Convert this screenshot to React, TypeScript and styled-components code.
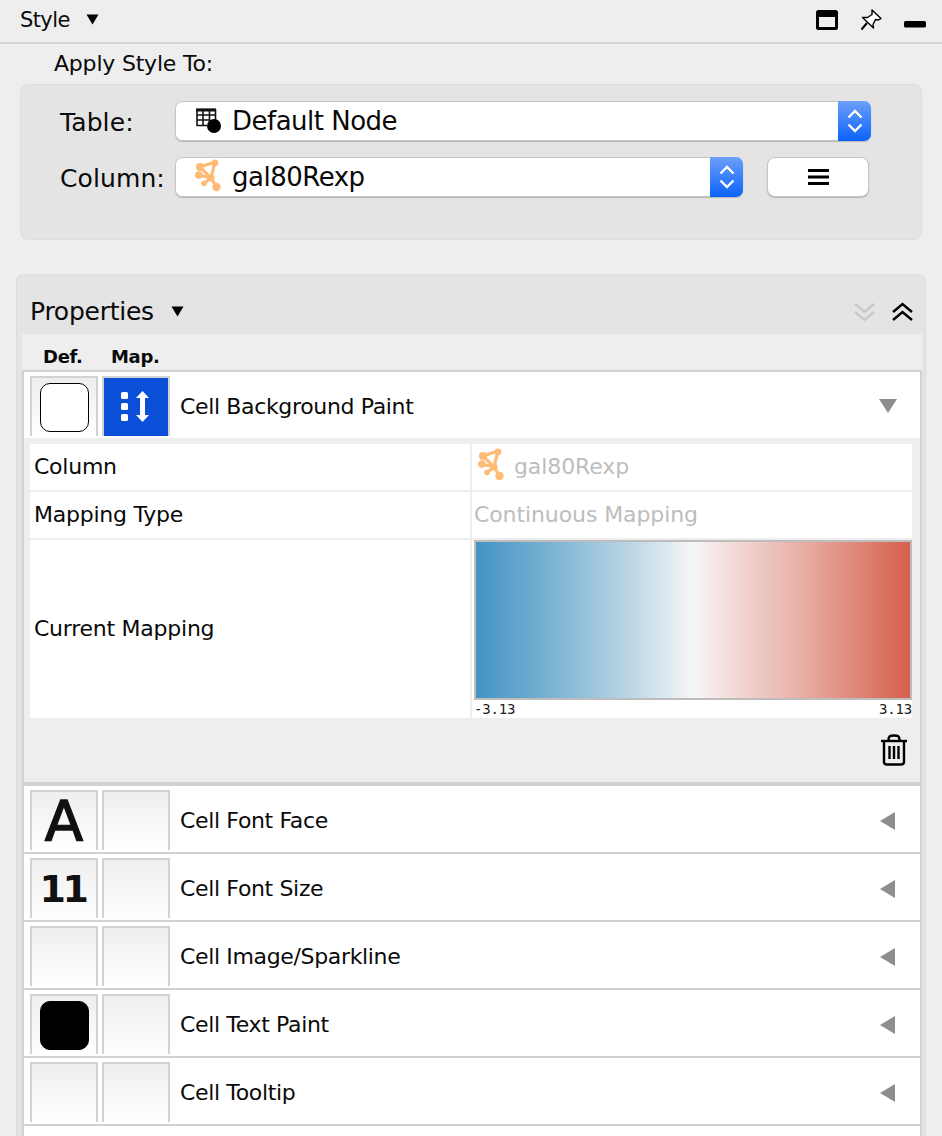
import styled, { createGlobalStyle } from 'styled-components';

const GlobalStyle = createGlobalStyle`
  html, body {
    margin: 0;
    padding: 0;
    background: #eeeeee;
  }
  * {
    box-sizing: border-box;
  }
`;

const Page = styled.div`
  width: 942px;
  height: 1136px;
  overflow: hidden;
  background: #eeeeee;
  color: #0a0a0a;
  font-family: 'DejaVu Sans', sans-serif;
`;

const TopBar = styled.div`
  height: 44px;
  display: flex;
  align-items: center;
  padding: 0 16px 3px 20px;
  border-bottom: 2px solid #d4d4d4;
`;

const TopTitle = styled.span`
  font-size: 21px;
  letter-spacing: -0.6px;
  width: 66px;
`;

const TopIcons = styled.div`
  margin-left: auto;
  display: flex;
  align-items: center;
  width: 110px;
  gap: 22px;
`;

const ApplyLabel = styled.div`
  height: 40px;
  padding: 7px 0 0 54px;
  font-size: 22px;
  letter-spacing: -0.2px;
  line-height: 26px;
`;

const GroupBox = styled.div`
  margin-left: 20px;
  width: 902px;
  height: 156px;
  padding: 16px 0 0 39px;
  background: #e4e4e4;
  border: 1px solid #dedede;
  border-radius: 8px;
  display: flex;
  flex-direction: column;
  gap: 16px;
`;

const FieldRow = styled.div`
  display: flex;
  align-items: center;
  height: 40px;
`;

const FieldLabel = styled.span`
  width: 115px;
  padding-top: 2px;
  font-size: 25px;
  letter-spacing: 0.1px;
`;

const Select = styled.div<{ $width: number }>`
  width: ${(p) => p.$width}px;
  height: 40px;
  display: flex;
  align-items: center;
  background: #fff;
  border-radius: 7px;
  box-shadow: 0 0 0 1px #c4c4c4 inset, 0 1px 1px #b4b4b4;
  overflow: hidden;
`;

const SelectIcon = styled.span`
  width: 57px;
  display: flex;
  padding-left: 20px;
`;

const SelectValue = styled.span`
  flex: 1;
  font-size: 26px;
  letter-spacing: -0.5px;
`;

const Spinner = styled.span`
  width: 33px;
  height: 40px;
  display: flex;
  align-items: center;
  justify-content: center;
  background: linear-gradient(#6d9ffb, #0a62fb);
`;

const MenuButton = styled.button`
  margin-left: 24px;
  width: 102px;
  height: 40px;
  display: flex;
  align-items: center;
  justify-content: center;
  background: #fff;
  border: 1px solid #c4c4c4;
  border-radius: 8px;
  box-shadow: 0 1px 1px #b4b4b4;
  padding: 0;
`;

const PropertiesPanel = styled.div`
  margin: 34px 0 0 16px;
  width: 910px;
  height: 900px;
  padding: 0 3px 0 5px;
  background: #e4e4e4;
  border: 1px solid #dcdcdc;
  border-bottom: 0;
  border-radius: 8px 8px 0 0;
`;

const PanelHeader = styled.div`
  height: 59px;
  display: flex;
  align-items: center;
  padding: 14px 0 0 8px;
`;

const PanelTitle = styled.span`
  font-size: 25px;
  letter-spacing: -0.25px;
  width: 141px;
`;

const CollapseIcons = styled.div`
  margin-left: auto;
  display: flex;
  align-items: center;
  gap: 17px;
  padding-right: 9px;
`;

const ColumnHeads = styled.div`
  height: 38px;
  background: #eeeeee;
  border-bottom: 2px solid #d2d2d2;
  display: flex;
  padding: 12px 0 0 21px;
  font-size: 18px;
  font-weight: bold;
  line-height: 22px;
  letter-spacing: -0.3px;
`;

const HeadCell = styled.span`
  width: 68px;
`;

const PropertyList = styled.div`
  background: #fff;
  border-left: 2px solid #d2d2d2;
  border-right: 2px solid #d2d2d2;
  min-height: 780px;
`;

const PropertyRow = styled.div`
  height: 68px;
  padding: 4px 23px 0 6px;
  display: flex;
  align-items: flex-start;
  gap: 4px;
  background: #fff;
  border-bottom: 2px solid #d2d2d2;
`;

const OpenRow = styled(PropertyRow)`
  height: 66px;
  border-bottom: 0;
`;

const CellButton = styled.div<{ $active?: boolean }>`
  width: 68px;
  height: 60px;
  display: flex;
  align-items: center;
  justify-content: center;
  border: 2px solid #d2d2d2;
  border-bottom: 0;
  background: ${(p) => (p.$active ? '#0b4fd9' : 'linear-gradient(#eeeeee, #ffffff)')};
`;

const Swatch = styled.span<{ $fill: string }>`
  width: 49px;
  height: 49px;
  border-radius: 10px;
  border: 1px solid #000;
  background: ${(p) => p.$fill};
`;

const FontGlyph = styled.span`
  font-size: 56px;
  line-height: 58px;
  color: #111;
  -webkit-text-stroke: 1.5px #111;
`;

const SizeGlyph = styled.span`
  font-size: 38px;
  font-weight: bold;
  line-height: 58px;
  letter-spacing: -3.5px;
  padding-right: 3px;
  color: #111;
`;

const PropertyName = styled.span`
  margin-left: 6px;
  flex: 1;
  line-height: 62px;
  font-size: 22px;
  letter-spacing: -0.35px;
`;

const Triangle = styled.svg`
  margin-top: 22px;
`;

const MappingArea = styled.div`
  height: 344px;
  padding: 6px 6px 0 6px;
  background: #eeeeee;
`;

const MappingTable = styled.div`
  display: grid;
  grid-template-columns: 440px 442px;
  grid-template-rows: 46px 46px 178px;
  gap: 2px 0;
  background: #eeeeee;
`;

const MappingKey = styled.div`
  background: #fff;
  padding: 0 0 2px 4px;
  display: flex;
  align-items: center;
  font-size: 22px;
  letter-spacing: -0.25px;
`;

const MappingValue = styled.div`
  margin-left: 2px;
  background: #fff;
  display: flex;
  align-items: center;
  padding: 0 0 2px 2px;
  gap: 8px;
  color: #bdbdbd;
  font-size: 22px;
  letter-spacing: -0.1px;
`;

const ValueIcon = styled.span`
  display: flex;
  margin-left: 4px;
`;

const GradientCell = styled.div`
  margin-left: 2px;
  background: #fff;
  padding-left: 2px;
  display: flex;
  flex-direction: column;
`;

const GradientBar = styled.div`
  height: 160px;
  border: 2px solid #bdbdbd;
  background: linear-gradient(90deg, #4393c3, #94c1da 25%, #d9e6ee 43%, #f7f7f7 50%, #f3dedc 58%, #e8aea5 75%, #d6604d);
`;

const ScaleLabels = styled.div`
  display: flex;
  justify-content: space-between;
  font-family: 'DejaVu Sans Mono', monospace;
  font-size: 14px;
  letter-spacing: -0.2px;
  line-height: 18px;
  color: #222;
`;

const TrashRow = styled.div`
  display: flex;
  justify-content: flex-end;
  padding: 16px 6px 0 0;
`;

const ThickDivider = styled.div`
  height: 4px;
  background: #d2d2d2;
`;

const NetworkIcon = () => (
  <svg width="28" height="36" viewBox="0 0 28 36" fill="#fdbb74" stroke="#fdbb74" strokeWidth="3.2">
    <path d="M20 3 L5 8 L16 19 L21.5 28 M16 19 L3.5 16 M16 19 L9 24.5 M20 3 L16 19" fill="none" />
    <circle cx="20" cy="3.8" r="3.4" stroke="none" />
    <circle cx="5" cy="8" r="4" stroke="none" />
    <circle cx="3.8" cy="16" r="3.8" stroke="none" />
    <circle cx="16" cy="19" r="3.6" stroke="none" />
    <circle cx="9" cy="24.5" r="2.8" stroke="none" />
    <circle cx="21.5" cy="28" r="4.2" stroke="none" />
  </svg>
);

const TableIcon = () => (
  <svg width="28" height="28" viewBox="0 0 28 28">
    <path
      d="M1.5 2.5H21M1.5 8H21M1.5 13H15M1.5 18.5H12M2 2v17M8 2v17M14.5 2v15M20.5 2v12"
      stroke="#111"
      strokeWidth="1.6"
      fill="none"
    />
    <rect x="1" y="1.5" width="20" height="3" fill="#111" />
    <circle cx="19" cy="19" r="7" fill="#000" />
  </svg>
);

const SpinnerArrows = () => (
  <svg width="16" height="26" viewBox="0 0 16 26" fill="none" stroke="#fff" strokeWidth="2.4">
    <path d="M1.5 9.5 L8 3 L14.5 9.5" />
    <path d="M1.5 16.5 L8 23 L14.5 16.5" />
  </svg>
);

const WindowIcon = () => (
  <svg width="22" height="20" viewBox="0 0 22 20">
    <rect x="1.5" y="1.5" width="19" height="17" rx="1" fill="none" stroke="#000" strokeWidth="3" />
    <rect x="1" y="1" width="20" height="6" fill="#000" />
  </svg>
);

const PinIcon = () => (
  <svg width="22" height="22" viewBox="0 0 22 22" fill="#fff" stroke="#000" strokeWidth="1.4" strokeLinejoin="round">
    <path d="M12 1 L21 9.5 L18.5 11 L15.5 10.5 L13 15.5 L13.5 19 L2.5 8.5 L7.5 8.5 L12 5.5 Z" />
    <path d="M7 14 L1.5 20.5" fill="none" strokeWidth="2" />
  </svg>
);

const MinimizeIcon = () => (
  <svg width="22" height="20" viewBox="0 0 22 20">
    <rect x="0" y="11" width="22" height="6.5" rx="1.5" fill="#000" />
  </svg>
);

const DoubleChevron = ({ up, color }: { up?: boolean; color: string }) => (
  <svg width="21" height="20" viewBox="0 0 21 20" fill="none" stroke={color} strokeWidth="2.4">
    {up ? <path d="M1 10 L10.5 2 L20 10 M1 18 L10.5 10 L20 18" /> : <path d="M1 2 L10.5 10 L20 2 M1 10 L10.5 18 L20 10" />}
  </svg>
);

const MappingIcon = () => (
  <svg width="34" height="34" viewBox="0 0 34 34" fill="#fff">
    <rect x="2" y="2" width="7" height="7" rx="1.5" />
    <rect x="2" y="13" width="7" height="7" rx="1.5" />
    <rect x="2" y="24" width="7" height="7" rx="1.5" />
    <path d="M23.5 1 L30 8 H26 V25 H30 L23.5 32 L17 25 H21 V8 H17 Z" />
  </svg>
);

const TrashIcon = () => (
  <svg width="28" height="32" viewBox="0 0 28 32" fill="none" stroke="#000" strokeWidth="2.4" strokeLinejoin="round">
    <path d="M1 7 H27" />
    <path d="M8.5 6 C8.5 2 10 1.5 14 1.5 C18 1.5 19.5 2 19.5 6" />
    <path d="M4 7 V28 C4 30 5 30.5 7 30.5 H21 C23 30.5 24 30 24 28 V7" />
    <path d="M9.5 12 V25 M14 12 V25 M18.5 12 V25" />
  </svg>
);

const DownTriangle = () => (
  <Triangle width="20" height="15" viewBox="0 0 20 15">
    <path d="M2 1 H20 L11 15 Z" fill="#8e8e8e" />
  </Triangle>
);

const LeftTriangle = () => (
  <Triangle width="20" height="18" viewBox="0 0 20 18">
    <path d="M18 0 V18 L3 9 Z" fill="#8e8e8e" />
  </Triangle>
);

const HeaderCaret = () => (
  <svg width="13" height="11" viewBox="0 0 13 11">
    <path d="M0.5 0.5 H12.5 L6.5 10.5 Z" fill="#000" />
  </svg>
);

const closedRows = [
  { name: 'Cell Font Face', def: <FontGlyph>A</FontGlyph> },
  { name: 'Cell Font Size', def: <SizeGlyph>11</SizeGlyph> },
  { name: 'Cell Image/Sparkline', def: null },
  { name: 'Cell Text Paint', def: <Swatch $fill="#000" /> },
  { name: 'Cell Tooltip', def: null },
];

export default function App() {
  return (
    <Page>
      <GlobalStyle />
      <TopBar>
        <TopTitle>Style</TopTitle>
        <HeaderCaret />
        <TopIcons>
          <WindowIcon />
          <PinIcon />
          <MinimizeIcon />
        </TopIcons>
      </TopBar>
      <ApplyLabel>Apply Style To:</ApplyLabel>
      <GroupBox>
        <FieldRow>
          <FieldLabel>Table:</FieldLabel>
          <Select $width={696}>
            <SelectIcon>
              <TableIcon />
            </SelectIcon>
            <SelectValue>Default Node</SelectValue>
            <Spinner>
              <SpinnerArrows />
            </Spinner>
          </Select>
        </FieldRow>
        <FieldRow>
          <FieldLabel>Column:</FieldLabel>
          <Select $width={568}>
            <SelectIcon>
              <NetworkIcon />
            </SelectIcon>
            <SelectValue>gal80Rexp</SelectValue>
            <Spinner>
              <SpinnerArrows />
            </Spinner>
          </Select>
          <MenuButton>
            <svg width="21" height="16" viewBox="0 0 21 16">
              <path d="M0 1.5H21M0 8H21M0 14.5H21" stroke="#000" strokeWidth="3" />
            </svg>
          </MenuButton>
        </FieldRow>
      </GroupBox>
      <PropertiesPanel>
        <PanelHeader>
          <PanelTitle>Properties</PanelTitle>
          <HeaderCaret />
          <CollapseIcons>
            <DoubleChevron color="#c8c8c8" />
            <DoubleChevron up color="#000" />
          </CollapseIcons>
        </PanelHeader>
        <ColumnHeads>
          <HeadCell>Def.</HeadCell>
          <HeadCell>Map.</HeadCell>
        </ColumnHeads>
        <PropertyList>
          <OpenRow>
            <CellButton>
              <Swatch $fill="#fff" />
            </CellButton>
            <CellButton $active>
              <MappingIcon />
            </CellButton>
            <PropertyName>Cell Background Paint</PropertyName>
            <DownTriangle />
          </OpenRow>
          <MappingArea>
            <MappingTable>
              <MappingKey>Column</MappingKey>
              <MappingValue>
                <ValueIcon>
                  <NetworkIcon />
                </ValueIcon>
                gal80Rexp
              </MappingValue>
              <MappingKey>Mapping Type</MappingKey>
              <MappingValue>Continuous Mapping</MappingValue>
              <MappingKey>Current Mapping</MappingKey>
              <GradientCell>
                <GradientBar />
                <ScaleLabels>
                  <span>-3.13</span>
                  <span>3.13</span>
                </ScaleLabels>
              </GradientCell>
            </MappingTable>
            <TrashRow>
              <TrashIcon />
            </TrashRow>
          </MappingArea>
          <ThickDivider />
          {closedRows.map((row) => (
            <PropertyRow key={row.name}>
              <CellButton>{row.def}</CellButton>
              <CellButton />
              <PropertyName>{row.name}</PropertyName>
              <LeftTriangle />
            </PropertyRow>
          ))}
        </PropertyList>
      </PropertiesPanel>
    </Page>
  );
}
